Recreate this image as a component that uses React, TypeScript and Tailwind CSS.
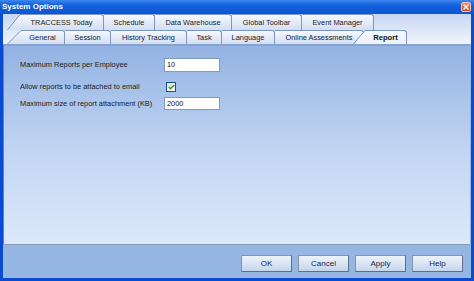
import type { ReactNode } from "react";

type TabSpec = {
  label: string;
  width: string;
  selected?: boolean;
};

const BACK_ROW: readonly TabSpec[] = [
  { label: "TRACCESS Today", width: "w-[84px]" },
  { label: "Schedule", width: "w-[51px]" },
  { label: "Data Warehouse", width: "w-[77px]" },
  { label: "Global Toolbar", width: "w-[70px]" },
  { label: "Event Manager", width: "w-[72px]" },
];

const FRONT_ROW: readonly TabSpec[] = [
  { label: "General", width: "w-[44px]" },
  { label: "Session", width: "w-[46px]" },
  { label: "History Tracking", width: "w-[76px]" },
  { label: "Task", width: "w-[35px]" },
  { label: "Language", width: "w-[53px]" },
  { label: "Online Assessments", width: "w-[89px]" },
];

const BUTTONS = ["OK", "Cancel", "Apply", "Help"];

/** Slanted leading edge of a tab, drawn to match the tab fill. */
function Slant({ w, h, id, top, bottom }: { w: number; h: number; id: string; top: string; bottom: string }) {
  return (
    <svg width={w} height={h} className="block shrink-0">
      <defs>
        <linearGradient id={id} x1="0" y1="0" x2="0" y2="1">
          <stop offset="0" stopColor={top} />
          <stop offset="1" stopColor={bottom} />
        </linearGradient>
      </defs>
      <polygon points={`0,${h + 1} ${w},0.5 ${w},${h + 1}`} fill={`url(#${id})`} />
      <line x1="0" y1={h + 0.5} x2={w} y2="0.5" stroke="#7b96c3" strokeWidth="1" />
    </svg>
  );
}

function Tab({ spec }: { spec: TabSpec }) {
  return (
    <div
      className={`${spec.width} flex h-full shrink-0 items-center justify-center rounded-tr-[3px] border-t border-r border-[#7b96c3] bg-[linear-gradient(to_bottom,#f5f8fe,#d3def2)] text-[7.4px] text-[#1b1b1b]`}
    >
      {spec.label}
    </div>
  );
}

function TabRow({ tabs, slant, height, children }: { tabs: readonly TabSpec[]; slant: number; height: string; children?: ReactNode }) {
  return (
    <div className={`flex ${height} items-stretch pl-[4px]`}>
      <Slant w={slant} h={height === "h-[16px]" ? 16 : 14} id={`s${slant}`} top="#f5f8fe" bottom="#d3def2" />
      {tabs.map((t) => (
        <Tab key={t.label} spec={t} />
      ))}
      {children}
    </div>
  );
}

function TitleBar() {
  return (
    <div className="flex h-[14px] items-center justify-between bg-[linear-gradient(to_bottom,#3f86f0,#1462dd_35%,#0c55d3)] pl-[2px] pr-[3px]">
      <span className="text-[8px] font-bold leading-none text-white">System Options</span>
      <div className="flex h-[10px] w-[10px] items-center justify-center rounded-[2px] border border-[#f3c2b2] bg-[linear-gradient(to_bottom,#f08a5e,#d8461e)]">
        <svg width="6" height="6" viewBox="0 0 6 6">
          <path d="M1 1 L5 5 M5 1 L1 5" stroke="#fff" strokeWidth="1.3" strokeLinecap="square" />
        </svg>
      </div>
    </div>
  );
}

function Tabs() {
  return (
    <div className="flex h-[30px] flex-col bg-[linear-gradient(to_bottom,#c6d6f3,#f1f5fc)]">
      <TabRow tabs={BACK_ROW} slant={13} height="h-[16px]" />
      <TabRow tabs={FRONT_ROW} slant={14} height="h-[14px]">
        <div className="relative z-10 -ml-[11px] flex h-full">
          <Slant w={12} h={14} id="sel" top="#f3f7fe" bottom="#edf2fb" />
          <div className="flex h-full w-[42px] items-center justify-center rounded-tr-[3px] border-t border-r border-[#7b96c3] bg-[linear-gradient(to_bottom,#f3f7fe,#edf2fb)] text-[7.6px] font-bold text-[#111]">
            Report
          </div>
        </div>
      </TabRow>
    </div>
  );
}

function Field({ value }: { value: string }) {
  return (
    <div className="flex h-full w-[56px] items-center border border-[#7f9db9] bg-white pl-[2px] text-[7.4px] text-[#111]">
      {value}
    </div>
  );
}

function Checkbox() {
  return (
    <div className="ml-[2px] flex h-[10px] w-[10px] items-center justify-center border border-[#1c5180] bg-[linear-gradient(135deg,#dcdcd6,#ffffff)]">
      <svg width="7" height="6" viewBox="0 0 7 6">
        <path d="M0.8 3 L2.6 4.8 L6.2 1" stroke="#21a121" strokeWidth="1.4" fill="none" />
      </svg>
    </div>
  );
}

function Row({ label, mt, h, children }: { label: string; mt: string; h: string; children: ReactNode }) {
  return (
    <div className={`flex ${mt} ${h} items-center`}>
      <span className="w-[144px] text-[7.4px] text-[#1b1b1b]">{label}</span>
      {children}
    </div>
  );
}

function Panel() {
  return (
    <div className="mr-[1px] flex flex-1 flex-col border-t-2 border-b border-l border-t-[#86a2d0] border-b-[#8e9db6] border-l-[#5f7fb6] bg-[linear-gradient(to_bottom,#93b3e3,#c3d6f3_55%,#dde9fa)] pt-[12px] pl-[16px]">
      <Row label="Maximum Reports per Employee" mt="mt-0" h="h-[14px]">
        <Field value="10" />
      </Row>
      <Row label="Allow reports to be attached to email" mt="mt-[8px]" h="h-[13px]">
        <Checkbox />
      </Row>
      <Row label="Maximum size of report attachment (KB)" mt="mt-[4px]" h="h-[13px]">
        <Field value="2000" />
      </Row>
    </div>
  );
}

function ButtonBar() {
  return (
    <div className="flex h-[33px] items-start justify-end gap-[6px] pt-[10px] pr-[8px]">
      {BUTTONS.map((b) => (
        <button
          key={b}
          className="flex h-[17px] w-[51px] items-center justify-center border border-[#8593ad] border-r-[#5f6d88] border-b-[#5f6d88] bg-[linear-gradient(to_bottom,#eef3fb,#c6d5ec)] text-[8px] text-[#1e2640]"
        >
          {b}
        </button>
      ))}
    </div>
  );
}

export default function App() {
  return (
    <div className="flex h-[281px] w-[474px] flex-col bg-[#0b4bd0] font-['Liberation_Sans',Arial,sans-serif]">
      <TitleBar />
      <div className="mx-[3px] mb-[3px] flex flex-1 flex-col bg-[#95b5e3]">
        <Tabs />
        <Panel />
        <ButtonBar />
      </div>
    </div>
  );
}
